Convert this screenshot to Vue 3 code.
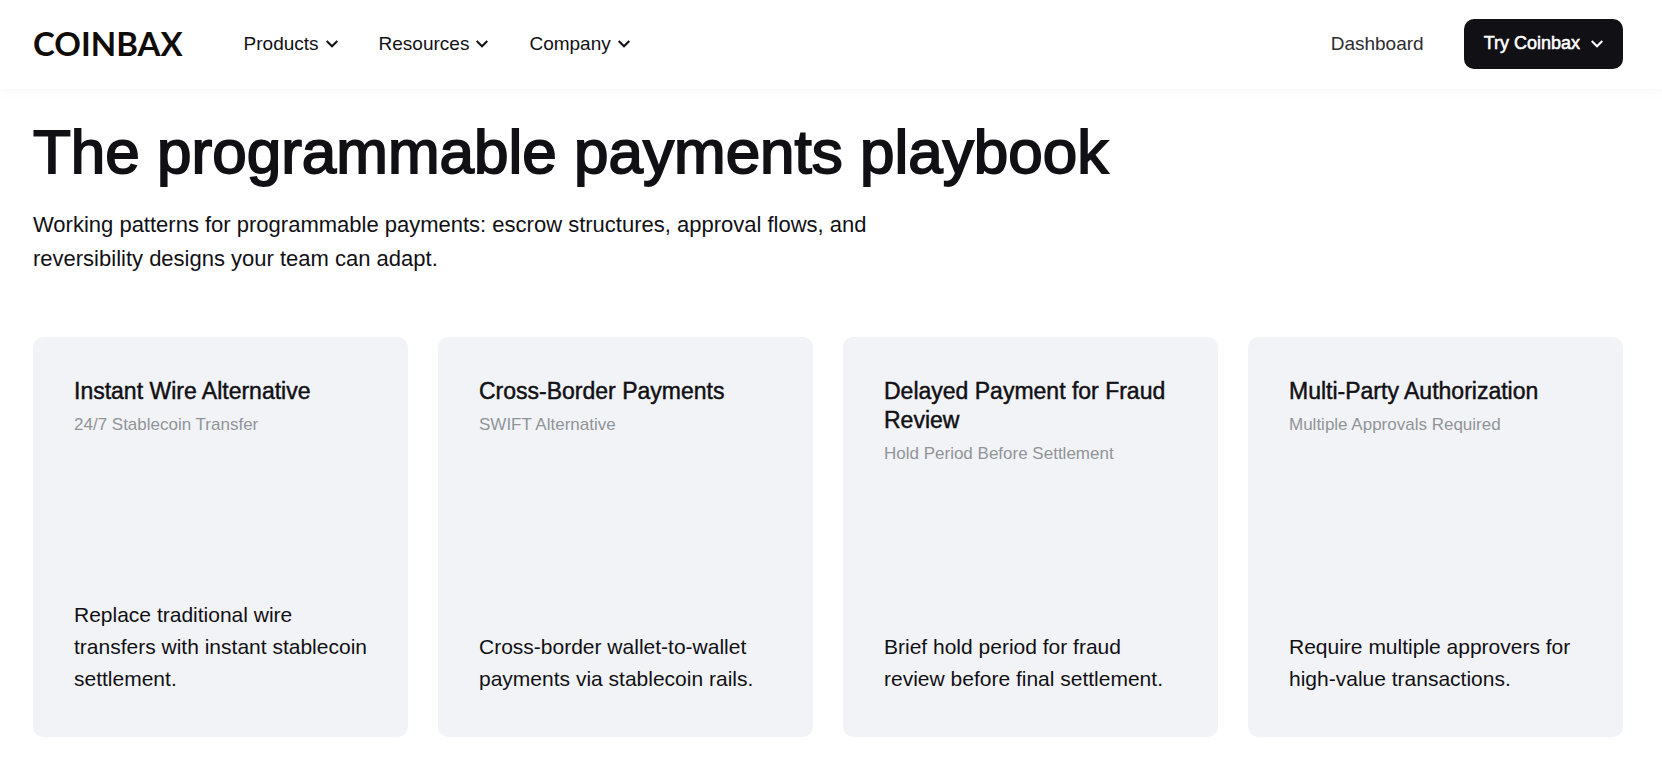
<script setup>
const menus = ['Products', 'Resources', 'Company']

const plays = [
  {
    title: 'Instant Wire Alternative',
    subtitle: '24/7 Stablecoin Transfer',
    text: 'Replace traditional wire transfers with instant stablecoin settlement.',
  },
  {
    title: 'Cross-Border Payments',
    subtitle: 'SWIFT Alternative',
    text: 'Cross-border wallet-to-wallet payments via stablecoin rails.',
  },
  {
    title: 'Delayed Payment for Fraud Review',
    subtitle: 'Hold Period Before Settlement',
    text: 'Brief hold period for fraud review before final settlement.',
  },
  {
    title: 'Multi-Party Authorization',
    subtitle: 'Multiple Approvals Required',
    text: 'Require multiple approvers for high-value transactions.',
  },
]
</script>

<template>
  <div class="page">
    <header class="header">
      <a class="logo" href="#">COINBAX</a>
      <nav class="nav" aria-label="Main">
        <button v-for="menu in menus" :key="menu" class="menu" type="button">
          {{ menu }}
          <svg class="chevron" viewBox="0 0 12 8" aria-hidden="true">
            <path d="M0.7 1 6 6.3 11.3 1" />
          </svg>
        </button>
      </nav>
      <a class="dashboard" href="#">Dashboard</a>
      <button class="cta" type="button">
        Try Coinbax
        <svg class="chevron" viewBox="0 0 12 8" aria-hidden="true">
          <path d="M0.7 1 6 6.3 11.3 1" />
        </svg>
      </button>
    </header>

    <main class="main">
      <h1 class="title">The programmable payments playbook</h1>
      <p class="lead">
        Working patterns for programmable payments: escrow structures, approval flows, and
        reversibility designs your team can adapt.
      </p>
      <section class="cards" aria-label="Playbook">
        <article v-for="play in plays" :key="play.title" class="card">
          <div>
            <h2 class="card-title">{{ play.title }}</h2>
            <p class="card-subtitle">{{ play.subtitle }}</p>
          </div>
          <p class="card-text">{{ play.text }}</p>
        </article>
      </section>
    </main>
  </div>
</template>

<style>
body {
  background: #fff;
}
</style>

<style scoped>
.page {
  font-family: "Liberation Sans", Arial, sans-serif;
  color: #111014;
}

.header {
  display: flex;
  align-items: center;
  height: 89px;
  padding: 0 39px 2px 33px;
  box-sizing: border-box;
  background: #fff;
  box-shadow: 0 2px 12px rgba(0, 0, 0, 0.04);
}

.logo {
  padding-bottom: 2px;
  color: #100c08;
  font-family: Lato, sans-serif;
  font-size: 33px;
  font-weight: 700;
  line-height: 40px;
  text-decoration: none;
}

.nav {
  display: flex;
  gap: 41px;
  margin-left: 61px;
}

.menu,
.cta {
  display: flex;
  align-items: center;
  padding: 0;
  border: 0;
  background: none;
  color: inherit;
  font: inherit;
  cursor: pointer;
}

.menu {
  gap: 7px;
  font-size: 19px;
  line-height: 28px;
}

.chevron {
  width: 12px;
  height: 8px;
  fill: none;
  stroke: currentColor;
  stroke-width: 2;
}

.dashboard {
  margin-left: auto;
  color: #2d2c31;
  font-size: 19px;
  line-height: 28px;
  text-decoration: none;
}

.cta {
  gap: 11px;
  height: 50px;
  margin-left: 40px;
  padding: 0 20px;
  border-radius: 10px;
  background: #111014;
  color: #fff;
  font-size: 18px;
  -webkit-text-stroke: 0.03em currentColor;
}

.main {
  padding: 27px 39px 33px 33px;
}

.title {
  margin: 0;
  font-size: 62px;
  font-weight: 400;
  line-height: 72px;
  -webkit-text-stroke: 0.03em currentColor;
}

.lead {
  max-width: 860px;
  margin: 20px 0 61px;
  font-size: 22px;
  line-height: 34px;
}

.cards {
  display: grid;
  grid-template-columns: repeat(4, 1fr);
  gap: 30px;
}

.card {
  display: flex;
  flex-direction: column;
  justify-content: space-between;
  min-height: 400px;
  padding: 40px 40px 42px 41px;
  box-sizing: border-box;
  border-radius: 10px;
  background: #f1f3f7;
}

.card-title {
  margin: 0;
  font-size: 23px;
  font-weight: 400;
  line-height: 29px;
  -webkit-text-stroke: 0.02em currentColor;
}

.card-subtitle {
  margin: 5px 0 0;
  color: #929497;
  font-size: 17px;
  line-height: 27px;
}

.card-text {
  margin: 0;
  font-size: 21px;
  line-height: 32px;
}
</style>
